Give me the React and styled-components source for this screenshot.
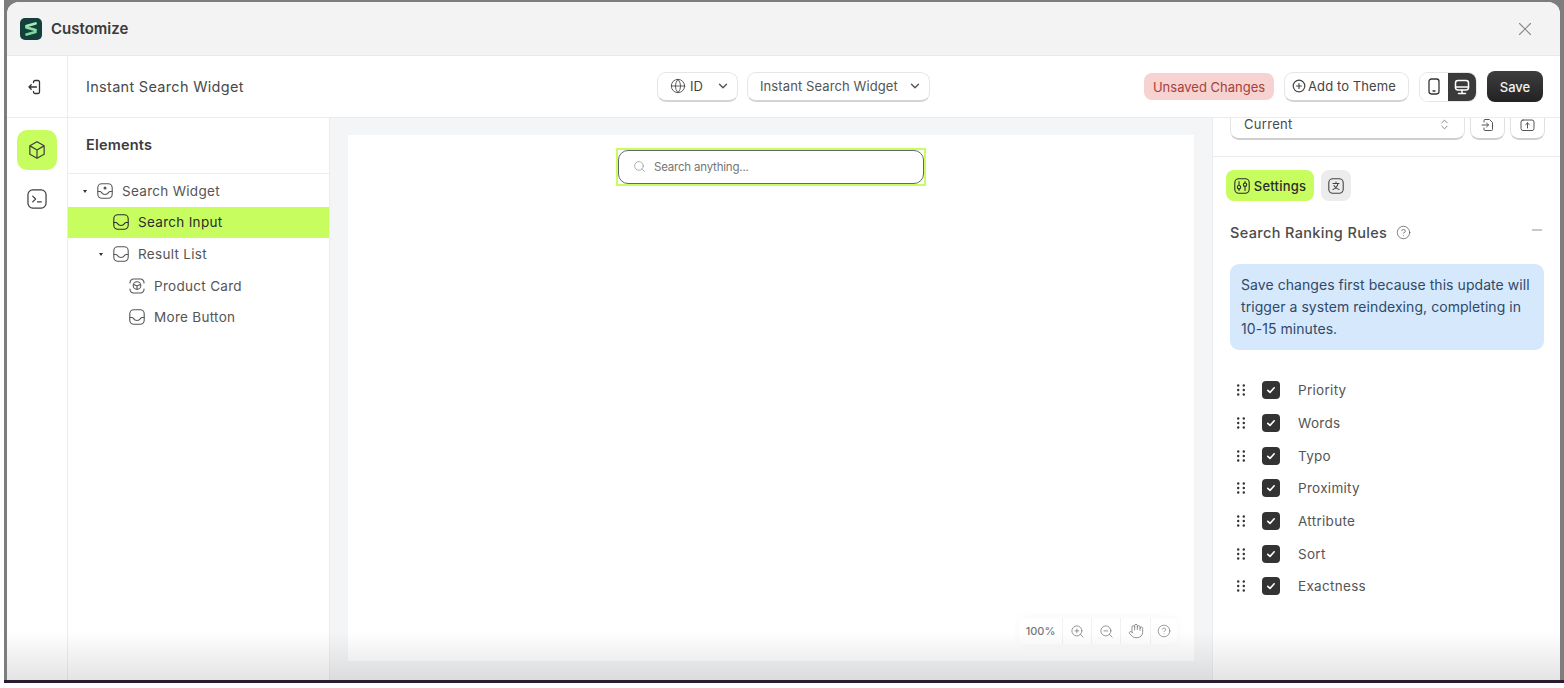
import styled, { createGlobalStyle } from "styled-components"
import { ChevronDown, ChevronsUpDown, CircleHelp, Globe, Hand, Minus, Search, X, ZoomIn, ZoomOut } from "lucide-react"

const GlobalStyle = createGlobalStyle`
    html, body {
        margin: 0;
        padding: 0;
        background: #fff;
        overflow: hidden;
    }
    * {
        box-sizing: border-box;
    }
    body {
        font-family: Inter, "Noto Sans", sans-serif;
        color: #4a4a4a;
    }
`

const Backdrop = styled.div`
    width: 1560px;
    height: 683px;
    margin-left: 4px;
    padding: 2px 0 0 3px;
    background: #7d7d7d;
    border-bottom: 3px solid #2b1b30;
`

const Window = styled.div`
    position: relative;
    width: 1553px;
    height: 678px;
    background: #fff;
    border-radius: 12px 12px 0 0;
    overflow: hidden;
    display: flex;
    flex-direction: column;
`

const BottomFade = styled.div`
    position: absolute;
    left: 0;
    right: 0;
    bottom: 0;
    height: 48px;
    background: linear-gradient(to bottom, rgba(120, 120, 120, 0), rgba(120, 120, 120, 0.2));
    pointer-events: none;
`

const TitleBar = styled.div`
    height: 54px;
    flex: none;
    display: flex;
    align-items: center;
    padding: 0 24px 0 13px;
    background: #f3f3f3;
    border-bottom: 1px solid #e8e8e8;
`

const TitleText = styled.div`
    margin-left: 9px;
    font-size: 15px;
    font-weight: 600;
    color: #3a3a3a;
`

const CloseButton = styled.div`
    margin-left: auto;
    display: flex;
    color: #8a8a8a;
`

const Toolbar = styled.div`
    height: 62px;
    flex: none;
    display: flex;
    align-items: center;
    border-bottom: 1px solid #ececec;
`

const ExitCell = styled.div`
    width: 61px;
    height: 100%;
    flex: none;
    display: flex;
    align-items: center;
    justify-content: center;
    padding-right: 4px;
    border-right: 1px solid #ececec;
    color: #333;
`

const PageName = styled.div`
    width: 589px;
    flex: none;
    padding-left: 18px;
    font-size: 14.5px;
    letter-spacing: 0.3px;
    color: #4a4a4a;
`

const SelectButton = styled.div`
    height: 30px;
    width: ${p => p.$width}px;
    flex: none;
    margin-right: 9px;
    display: flex;
    align-items: center;
    justify-content: space-between;
    padding: 0 7px 0 12px;
    border: 1px solid #e6e6e6;
    border-bottom: 2px solid #d4d4d4;
    border-radius: 9px;
    font-size: 13px;
    letter-spacing: 0.1px;
    color: #555;
    background: #fff;
`

const GlobeLabel = styled.span`
    display: flex;
    align-items: center;
    gap: 4px;
    color: #444;
`

const ToolbarRight = styled.div`
    margin-left: auto;
    padding-right: 17px;
    display: flex;
    align-items: center;
`

const UnsavedBadge = styled.div`
    width: 130px;
    height: 27px;
    display: flex;
    align-items: center;
    justify-content: center;
    border-radius: 8px;
    background: #f6d2d0;
    color: #a8413c;
    font-size: 13px;
`

const ThemeButton = styled.div`
    width: 125px;
    height: 30px;
    margin-left: 10px;
    padding-left: 7px;
    display: flex;
    align-items: center;
    gap: 2px;
    border: 1px solid #e6e6e6;
    border-bottom: 2px solid #d4d4d4;
    border-radius: 9px;
    font-size: 13px;
    letter-spacing: 0.1px;
    color: #444;
`

const DeviceToggle = styled.div`
    height: 30px;
    width: 58px;
    margin-left: 10px;
    display: flex;
    border: 1px solid #e6e6e6;
    border-radius: 9px;
    overflow: hidden;
`

const DeviceCell = styled.div`
    flex: 1;
    display: flex;
    align-items: center;
    justify-content: center;
    color: ${p => (p.$active ? "#fff" : "#333")};
    background: ${p => (p.$active ? "#3a3a3a" : "#fff")};
`

const SaveButton = styled.div`
    width: 56px;
    height: 31px;
    margin-left: 10px;
    display: flex;
    align-items: center;
    justify-content: center;
    border-radius: 8px;
    background: linear-gradient(#3e3e3e, #222);
    color: #f2f2f2;
    font-size: 13px;
    font-weight: 500;
`

const Body = styled.div`
    flex: 1;
    min-height: 0;
    display: flex;
`

const Rail = styled.div`
    width: 61px;
    flex: none;
    display: flex;
    flex-direction: column;
    align-items: center;
    gap: 19px;
    padding: 12px 0 0 0;
    border-right: 1px solid #ececec;
`

const RailButton = styled.div`
    width: ${p => (p.$active ? 40 : 22)}px;
    height: ${p => (p.$active ? 40 : 20)}px;
    display: flex;
    align-items: center;
    justify-content: center;
    border-radius: 10px;
    color: #3f3f3f;
    background: ${p => (p.$active ? "#c8fd60" : "transparent")};
`

const TreePanel = styled.div`
    width: 261px;
    flex: none;
`

const TreeHeader = styled.div`
    height: 56px;
    display: flex;
    align-items: center;
    padding: 0 0 2px 18px;
    border-bottom: 1px solid #ececec;
    font-size: 14.5px;
    font-weight: 600;
    letter-spacing: 0.2px;
    color: #3c3c3c;
`

const TreeRows = styled.div`
    padding-top: 1px;
`

const TreeRow = styled.div`
    height: 31.6px;
    display: flex;
    align-items: center;
    gap: 9px;
    padding-left: ${p => 29 + p.$depth * 16}px;
    position: relative;
    background: ${p => (p.$active ? "#c8fd60" : "transparent")};
    color: ${p => (p.$active ? "#2c2c2c" : "#555")};
    font-size: 13.5px;
    letter-spacing: 0.3px;
`

const Caret = styled.span`
    position: absolute;
    left: ${p => 15 + p.$depth * 16}px;
    top: 50%;
    margin-top: -1px;
    border-left: 2.5px solid transparent;
    border-right: 2.5px solid transparent;
    border-top: 3px solid #333;
`

const Canvas = styled.div`
    flex: 1;
    min-width: 0;
    padding: 17px 18px 19px;
    background: #f4f5f7;
    border-left: 1px solid #ececec;
    border-right: 1px solid #ececec;
`

const CanvasPage = styled.div`
    position: relative;
    height: 100%;
    background: #fff;
    display: flex;
    justify-content: center;
    padding: 13px 0 0 0;
`

const SelectedFrame = styled.div`
    width: 310px;
    height: 38px;
    border: 2px solid #c8fd60;
`

const SearchField = styled.div`
    height: 100%;
    display: flex;
    align-items: center;
    gap: 8px;
    padding: 0 0 1px 14px;
    border: 1px solid #666;
    border-radius: 10px;
    font-size: 11.5px;
    letter-spacing: -0.2px;
    color: #767676;
`

const ZoomBar = styled.div`
    position: absolute;
    right: 17px;
    bottom: 17px;
    height: 26px;
    display: flex;
    background: #fff;
    border-radius: 4px;
    color: #777;
    box-shadow: 0 0 10px rgba(0, 0, 0, 0.04);
`

const ZoomCell = styled.div`
    width: ${p => p.$width}px;
    display: flex;
    align-items: center;
    justify-content: center;
    border-left: ${p => (p.$first ? "none" : "1px solid #f1f1f1")};
    font-size: 11px;
    font-weight: 500;
`

const SidePanel = styled.div`
    width: 347px;
    flex: none;
`

const PresetRow = styled.div`
    height: 39px;
    display: flex;
    align-items: flex-start;
    padding: 0 15px 0 17px;
    border-bottom: 1px solid #ececec;
`

const PresetSelect = styled.div`
    width: 235px;
    height: 22px;
    display: flex;
    align-items: center;
    justify-content: space-between;
    padding: 0 13px 7px;
    border: 1px solid #e4e4e4;
    border-top: none;
    border-bottom: 2px solid #cfcfcf;
    border-radius: 0 0 9px 9px;
    font-size: 13px;
    line-height: 13px;
    letter-spacing: 0.3px;
    color: #4a4a4a;
`

const PresetButton = styled.div`
    width: 35px;
    height: 22px;
    margin-left: 5px;
    padding-bottom: 7px;
    display: flex;
    align-items: center;
    justify-content: center;
    border: 1px solid #e0e0e0;
    border-top: none;
    border-bottom: 2px solid #cfcfcf;
    border-radius: 0 0 9px 9px;
    color: #555;
`

const Tabs = styled.div`
    display: flex;
    gap: 7px;
    padding: 13px 0 0 13px;
`

const SettingsTab = styled.div`
    width: 88px;
    height: 31px;
    display: flex;
    align-items: center;
    justify-content: center;
    gap: 4px;
    border-radius: 8px;
    background: #c8fd60;
    color: #2b2b2b;
    font-size: 13px;
    font-weight: 500;
    letter-spacing: 0.2px;
`

const IconTab = styled.div`
    width: 30px;
    height: 31px;
    display: flex;
    align-items: center;
    justify-content: center;
    border-radius: 8px;
    background: #ececec;
    color: #444;
`

const SectionHead = styled.div`
    display: flex;
    align-items: center;
    gap: 9px;
    margin-top: 21px;
    padding: 0 15px 0 17px;
    height: 20px;
    font-size: 14.5px;
    font-weight: 500;
    letter-spacing: 0.35px;
    color: #4c4c4c;
`

const CollapseIcon = styled.span`
    margin-left: auto;
    display: flex;
    margin-top: -4px;
    color: #777;
`

const InfoBox = styled.div`
    width: 314px;
    margin: 22px 0 0 17px;
    padding: 10px 11px;
    border-radius: 9px;
    background: #d6e8fc;
    color: #2f4a68;
    font-size: 14px;
    letter-spacing: 0.06px;
    line-height: 22px;
`

const RuleList = styled.div`
    margin-top: 24px;
    padding-left: 24px;
`

const RuleRow = styled.div`
    height: 32.65px;
    display: flex;
    align-items: center;
    font-size: 13.5px;
    letter-spacing: 0.3px;
    color: #555;
`

const CheckBox = styled.span`
    width: 18px;
    height: 18px;
    margin: 0 18px 0 17px;
    display: flex;
    align-items: center;
    justify-content: center;
    border-radius: 4px;
    background: #333;
`

const DragDots = () => (
    <svg width="8" height="12" viewBox="0 0 8 12" fill="#333">
        {[1.5, 6, 10.5].map(y => [1.2, 6.8].map(x => <circle key={`${x}-${y}`} cx={x} cy={y} r="1.2" />))}
    </svg>
)

const Tick = () => (
    <svg width="10" height="10" viewBox="0 0 10 10" fill="none" stroke="#fff" strokeWidth="1.6" strokeLinecap="round" strokeLinejoin="round">
        <path d="M1.8 5.4 4 7.4 8.2 2.8" />
    </svg>
)

const Logo = () => (
    <svg width="22" height="22" viewBox="0 0 22 22" fill="none" strokeWidth="2.8" strokeLinecap="round">
        <rect width="22" height="22" rx="5" fill="#14403c" />
        <path d="M6.5 8 15.5 5.5" stroke="#a8e8b8" />
        <path d="M6.5 9.5 15.5 12" stroke="#8fdfa8" />
        <path d="M6.5 16.5 15.5 14" stroke="#7ed6a0" />
    </svg>
)

const ExitIcon = () => (
    <svg width="16" height="16" viewBox="0 0 16 16" fill="none" stroke="currentColor" strokeWidth="1.3" strokeLinecap="round" strokeLinejoin="round">
        <path d="M6.5 3.5V3a1.5 1.5 0 0 1 1.5-1.5h3A1.5 1.5 0 0 1 12.5 3v10a1.5 1.5 0 0 1-1.5 1.5H8A1.5 1.5 0 0 1 6.5 13v-.5" />
        <path d="M9.5 8H2M4.2 5.8 2 8l2.2 2.2" />
    </svg>
)

const CubeIcon = () => (
    <svg width="20" height="20" viewBox="0 0 21 21" fill="none" stroke="currentColor" strokeWidth="1.3" strokeLinejoin="round">
        <path d="M10.5 1.8 18 6v9l-7.5 4.2L3 15V6Z" strokeLinecap="round" />
        <path d="M3.2 6.2 10.5 10.5 17.8 6.2M10.5 10.5V19" />
    </svg>
)

const TerminalIcon = () => (
    <svg width="20" height="20" viewBox="0 0 21 21" fill="none" stroke="currentColor" strokeWidth="1.3" strokeLinecap="round" strokeLinejoin="round">
        <rect x="1" y="1" width="19" height="19" rx="5" />
        <path d="M6 7.5 9 10.5 6 13.5M11 13.5h4" />
    </svg>
)

// rounded box with a smile curve, used for the tree nodes
const NodeIcon = ({ kind }) => (
    <svg width="16" height="16" viewBox="0 0 16 16" fill="none" stroke="currentColor" strokeWidth="1.1" strokeLinecap="round" strokeLinejoin="round">
        <rect x="0.8" y="0.8" width="14.4" height="14.4" rx="4" />
        <path d="M1 8.5h2.2c1.2 0 1.3 3 4.8 3s3.6-3 4.8-3H15" />
        {kind === "widget" && <circle cx="8" cy="5" r="1.5" fill="currentColor" stroke="none" />}
    </svg>
)

const CardIcon = () => (
    <svg width="16" height="16" viewBox="0 0 16 16" fill="none" stroke="currentColor" strokeWidth="1.1" strokeLinecap="round" strokeLinejoin="round">
        <path d="M1 5V4.5A3.5 3.5 0 0 1 4.5 1h7A3.5 3.5 0 0 1 15 4.5V5M15 11v.5a3.5 3.5 0 0 1-3.5 3.5h-7A3.5 3.5 0 0 1 1 11.5V11" />
        <circle cx="8" cy="7.5" r="3.8" />
        <path d="M8 8v3.2M8 8 4.8 6.5M8 8l3.2-1.5" />
    </svg>
)

const PhoneIcon = () => (
    <svg width="14" height="17" viewBox="0 0 14 17" fill="none" stroke="currentColor" strokeWidth="1.3" strokeLinecap="round">
        <rect x="2" y="1" width="10" height="15" rx="2.4" />
        <path d="M6 13h2" />
    </svg>
)

const DesktopIcon = () => (
    <svg width="16" height="16" viewBox="0 0 16 16" fill="none" stroke="currentColor" strokeWidth="1.5" strokeLinecap="round" strokeLinejoin="round">
        <rect x="1.5" y="1.5" width="13" height="9.5" rx="2.4" />
        <path d="M1.5 8h13M8 11v3M4.5 14.5h7" />
    </svg>
)

const PlusCircle = () => (
    <svg width="14" height="14" viewBox="0 0 14 14" fill="none" stroke="currentColor" strokeWidth="1.2" strokeLinecap="round">
        <circle cx="7" cy="7" r="5.8" />
        <path d="M7 4.6v4.8M4.6 7h4.8" />
    </svg>
)

const ImportIcon = () => (
    <svg width="14" height="14" viewBox="0 0 14 14" fill="none" stroke="currentColor" strokeWidth="1" strokeLinecap="round" strokeLinejoin="round">
        <path d="M3 4V2.5A1 1 0 0 1 4 1.5h4.5L11.5 4.5V11.5a1 1 0 0 1-1 1H4a1 1 0 0 1-1-1V10" />
        <path d="M1 7h6.5M5.5 5l2 2-2 2" />
    </svg>
)

const ExportIcon = () => (
    <svg width="15" height="14" viewBox="0 0 15 14" fill="none" stroke="currentColor" strokeWidth="1" strokeLinecap="round" strokeLinejoin="round">
        <rect x="1" y="2" width="13" height="10.5" rx="2" />
        <path d="M7.5 10V5M5.7 6.6 7.5 4.9l1.8 1.7" />
    </svg>
)

const SettingsIcon = () => (
    <svg width="16" height="16" viewBox="0 0 16 16" fill="none" stroke="currentColor" strokeWidth="1.1" strokeLinecap="round">
        <rect x="0.8" y="0.8" width="14.4" height="14.4" rx="4" />
        <path d="M5 3.5v4M5 11v1.5M11 3.5V5M11 8.5v4" />
        <circle cx="5" cy="9.2" r="1.7" />
        <circle cx="11" cy="6.7" r="1.7" />
    </svg>
)

const TranslateIcon = () => (
    <svg width="16" height="16" viewBox="0 0 16 16" fill="none" stroke="currentColor" strokeWidth="1.1" strokeLinecap="round" strokeLinejoin="round">
        <rect x="0.8" y="0.8" width="14.4" height="14.4" rx="4" />
        <path d="M5 5.5h6M8 4v1.500M10 5.500C9.500 8 7.500 10.500 5 11.500M6 7.500C7 9.500 8.500 10.800 11 11.500" />
    </svg>
)

const rules = ["Priority", "Words", "Typo", "Proximity", "Attribute", "Sort", "Exactness"]

export default function App() {
    return (
        <>
            <GlobalStyle />
            <Backdrop>
                <Window>
                    <TitleBar>
                        <Logo />
                        <TitleText>Customize</TitleText>
                        <CloseButton><X size={22} strokeWidth={1.2} /></CloseButton>
                    </TitleBar>
                    <Toolbar>
                        <ExitCell><ExitIcon /></ExitCell>
                        <PageName>Instant Search Widget</PageName>
                        <SelectButton $width={81}>
                            <GlobeLabel><Globe size={16} strokeWidth={1.3} />ID</GlobeLabel>
                            <ChevronDown size={14} strokeWidth={2.4} />
                        </SelectButton>
                        <SelectButton $width={183}>
                            Instant Search Widget
                            <ChevronDown size={14} strokeWidth={2.4} />
                        </SelectButton>
                        <ToolbarRight>
                            <UnsavedBadge>Unsaved Changes</UnsavedBadge>
                            <ThemeButton><PlusCircle />Add to Theme</ThemeButton>
                            <DeviceToggle>
                                <DeviceCell><PhoneIcon /></DeviceCell>
                                <DeviceCell $active><DesktopIcon /></DeviceCell>
                            </DeviceToggle>
                            <SaveButton>Save</SaveButton>
                        </ToolbarRight>
                    </Toolbar>
                    <Body>
                        <Rail>
                            <RailButton $active><CubeIcon /></RailButton>
                            <RailButton><TerminalIcon /></RailButton>
                        </Rail>
                        <TreePanel>
                            <TreeHeader>Elements</TreeHeader>
                            <TreeRows>
                                <TreeRow $depth={0}><Caret $depth={0} /><NodeIcon kind="widget" />Search Widget</TreeRow>
                                <TreeRow $depth={1} $active><NodeIcon />Search Input</TreeRow>
                                <TreeRow $depth={1}><Caret $depth={1} /><NodeIcon />Result List</TreeRow>
                                <TreeRow $depth={2}><CardIcon />Product Card</TreeRow>
                                <TreeRow $depth={2}><NodeIcon />More Button</TreeRow>
                            </TreeRows>
                        </TreePanel>
                        <Canvas>
                            <CanvasPage>
                                <SelectedFrame>
                                    <SearchField>
                                        <Search size={13} strokeWidth={1.2} color="#888" />
                                        Search anything...
                                    </SearchField>
                                </SelectedFrame>
                                <ZoomBar>
                                    <ZoomCell $width={43} $first>100%</ZoomCell>
                                    <ZoomCell $width={29}><ZoomIn size={15} strokeWidth={1.2} /></ZoomCell>
                                    <ZoomCell $width={29}><ZoomOut size={15} strokeWidth={1.2} /></ZoomCell>
                                    <ZoomCell $width={30}><Hand size={16} strokeWidth={1.2} /></ZoomCell>
                                    <ZoomCell $width={27}><CircleHelp size={14} strokeWidth={1.2} /></ZoomCell>
                                </ZoomBar>
                            </CanvasPage>
                        </Canvas>
                        <SidePanel>
                            <PresetRow>
                                <PresetSelect>
                                    Current
                                    <ChevronsUpDown size={13} strokeWidth={1.2} />
                                </PresetSelect>
                                <PresetButton><ImportIcon /></PresetButton>
                                <PresetButton><ExportIcon /></PresetButton>
                            </PresetRow>
                            <Tabs>
                                <SettingsTab><SettingsIcon />Settings</SettingsTab>
                                <IconTab><TranslateIcon /></IconTab>
                            </Tabs>
                            <SectionHead>
                                Search Ranking Rules
                                <CircleHelp size={15} strokeWidth={1.1} />
                                <CollapseIcon><Minus size={16} strokeWidth={1.2} /></CollapseIcon>
                            </SectionHead>
                            <InfoBox>
                                Save changes first because this update will trigger a system reindexing, completing in 10-15 minutes.
                            </InfoBox>
                            <RuleList>
                                {rules.map(rule => (
                                    <RuleRow key={rule}>
                                        <DragDots />
                                        <CheckBox><Tick /></CheckBox>
                                        {rule}
                                    </RuleRow>
                                ))}
                            </RuleList>
                        </SidePanel>
                    </Body>
                    <BottomFade />
                </Window>
            </Backdrop>
        </>
    )
}
